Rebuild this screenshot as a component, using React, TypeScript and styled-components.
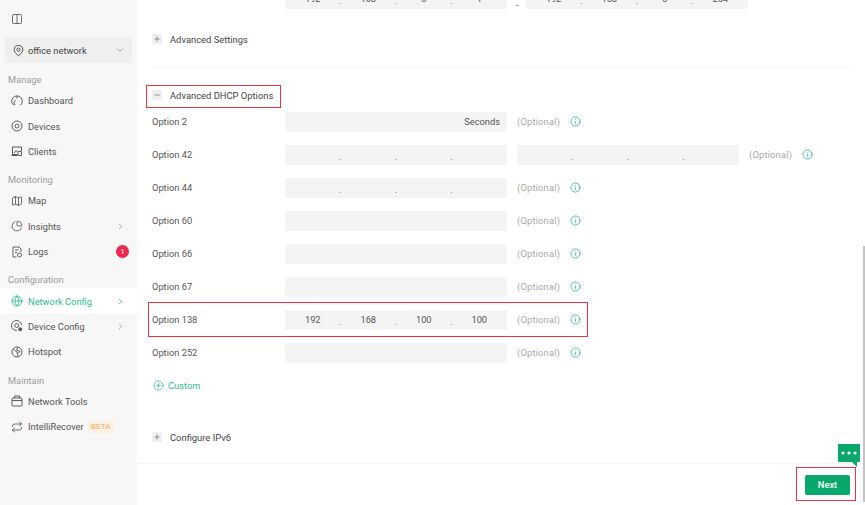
import React from 'react';
import styled, { createGlobalStyle } from 'styled-components';
import {
  ChartPie,
  ChevronDown,
  ChevronRight,
  CirclePlus,
  Columns2,
  Globe,
  Info,
  Map as MapIcon,
  Minus,
  Plus,
  Repeat,
} from 'lucide-react';

const GlobalStyle = createGlobalStyle`
  html, body {
    margin: 0;
    padding: 0;
    height: 100%;
    overflow: hidden;
    background: #fff;
  }
  #root {
    height: 100%;
  }
  * {
    box-sizing: border-box;
  }
`;

const Page = styled.div`
  position: relative;
  display: flex;
  width: 865px;
  height: 505px;
  overflow: hidden;
  font-family: Roboto, 'Noto Sans', sans-serif;
  font-size: 9.3px;
  color: #555;
`;

const Sidebar = styled.aside`
  flex: 0 0 137px;
  width: 137px;
  min-width: 0;
  background: #f7f7f7;
  display: flex;
  flex-direction: column;
`;

const SidebarTop = styled.div`
  height: 37px;
  padding: 13px 0 0 11px;
  color: #555;
`;

const SiteSelect = styled.div`
  margin: 0 5px;
  height: 26px;
  border-radius: 3px;
  background: #efefef;
  display: flex;
  align-items: center;
  padding: 0 7px;
  gap: 3px;
  color: #444;
  span {
    flex: 1;
  }
`;

const SectionLabel = styled.div<{ $gap: number }>`
  height: 14px;
  margin-top: ${(p) => p.$gap}px;
  margin-bottom: 2px;
  padding-left: 8px;
  line-height: 16px;
  color: #9c9c9c;
`;

const NavItem = styled.div<{ $active?: boolean }>`
  height: 25.4px;
  display: flex;
  align-items: center;
  padding: 0 12px 0 11px;
  gap: 5px;
  background: ${(p) => (p.$active ? '#fff' : 'transparent')};
  color: ${(p) => (p.$active ? '#2dbd8d' : '#555')};
  svg {
    flex: none;
  }
`;

const NavText = styled.span<{ $fit?: boolean }>`
  flex: ${(p) => (p.$fit ? 'none' : 1)};
  white-space: nowrap;
`;

const Count = styled.span`
  width: 13px;
  height: 13px;
  margin-right: -4px;
  border-radius: 50%;
  background: #f0284f;
  color: #fff;
  font-size: 8px;
  line-height: 13px;
  text-align: center;
`;

const Beta = styled.span`
  margin-left: -1px;
  width: 26px;
  height: 13px;
  border-radius: 2px;
  background: #fdf0e4;
  color: #f9a85c;
  font-size: 8px;
  line-height: 14px;
  text-align: center;
`;

const Main = styled.main`
  position: relative;
  flex: 1;
  display: flex;
  flex-direction: column;
  min-width: 0;
`;

const Content = styled.div`
  flex: 1;
  overflow: hidden;
  padding: 0 15px;
`;

const RangeRow = styled.div`
  height: 9px;
  margin-left: 133px;
  display: flex;
  align-items: flex-end;
  gap: 9px;
`;

const Dash = styled.span`
  width: 1px;
  height: 9px;
  line-height: 9px;
`;

const SectionHead = styled.div<{ $top: number }>`
  position: relative;
  display: flex;
  align-items: center;
  gap: 8px;
  height: 12px;
  margin-top: ${(p) => p.$top}px;
  color: #444;
  font-size: 9.4px;
`;

const Toggle = styled.span`
  width: 10px;
  height: 10px;
  border-radius: 1px;
  background: #efefef;
  color: #666;
  display: flex;
  align-items: center;
  justify-content: center;
`;

const Divider = styled.div`
  height: 1px;
  margin-top: 22px;
  background: #f6f6f6;
`;

const OptionList = styled.div`
  margin-top: 4px;
`;

const Row = styled.div`
  position: relative;
  display: flex;
  align-items: center;
  height: 33.05px;
`;

const RowLabel = styled.label`
  flex: 0 0 133px;
`;

const Field = styled.div<{ $clipped?: boolean }>`
  flex: 0 0 222px;
  height: ${(p) => (p.$clipped ? '9px' : '20px')};
  border-radius: ${(p) => (p.$clipped ? '0 0 2px 2px' : '2px')};
  background: #f4f4f4;
  overflow: hidden;
  display: flex;
  align-items: ${(p) => (p.$clipped ? 'flex-end' : 'center')};
`;

const Seconds = styled.span`
  margin-left: auto;
  padding-right: 7px;
`;

const Octet = styled.span`
  flex: 1 0 0;
  height: 20px;
  line-height: 20px;
  text-align: center;
`;

const Dot = styled.span`
  width: 0;
  height: 20px;
  line-height: 23px;
  display: inline-flex;
  justify-content: center;
  color: #666;
`;

const Optional = styled.span`
  margin-left: 10px;
  color: #a9a9a9;
  letter-spacing: 0.2px;
`;

const Hint = styled(Info)`
  margin-left: 10px;
  color: #2dbd8d;
`;

const SecondField = styled.div`
  margin-left: 10px;
  display: flex;
  flex: 0 0 222px;
`;

const CustomLink = styled.div`
  display: flex;
  align-items: center;
  gap: 4px;
  height: 14px;
  margin-top: 9px;
  margin-left: 1px;
  color: #2dbd8d;
`;

const Highlight = styled.div<{ $inset: string; $width?: number }>`
  position: absolute;
  inset: ${(p) => p.$inset};
  ${(p) => (p.$width ? `width: ${p.$width}px;` : '')}
  border: 1px solid #ee3340;
  pointer-events: none;
`;

const Footer = styled.footer`
  flex: 0 0 42px;
  border-top: 1px solid #f5f5f5;
  display: flex;
  align-items: center;
  justify-content: flex-end;
  padding-right: 15px;
`;

const NextButton = styled.button`
  position: relative;
  width: 45px;
  height: 20px;
  padding: 0;
  border: 0;
  border-radius: 2px;
  background: #08a86c;
  color: #fff;
  font: 500 9.3px Roboto, sans-serif;
`;

const ChatBubble = styled.svg`
  position: absolute;
  right: 5px;
  top: 444px;
`;

const ScrollThumb = styled.div`
  position: absolute;
  top: 246px;
  right: 0;
  bottom: 3px;
  width: 2px;
  background: #c4c4c4;
`;

const PinIcon = () => (
  <svg width="13" height="13" viewBox="0 0 24 24" fill="none" stroke="currentColor" strokeWidth="1.7">
    <path d="M12 2.5c-4.6 0-8 3.5-8 7.9 0 5 4.6 8.6 8 11.1 3.4-2.5 8-6.1 8-11.1 0-4.4-3.4-7.9-8-7.9z" />
    <circle cx="12" cy="10.5" r="3" />
  </svg>
);

const DashboardIcon = () => (
  <svg width="12" height="12" viewBox="0 0 24 24" fill="none" stroke="currentColor" strokeWidth="1.9">
    <path d="M5.5 20.5a10.5 10.5 0 1 1 13 0" />
    <path d="M8.5 20a5.5 5.5 0 0 1 1-9.5" />
    <path d="M12 2v5" />
  </svg>
);

const DevicesIcon = () => (
  <svg width="12" height="12" viewBox="0 0 24 24" fill="none" stroke="currentColor" strokeWidth="1.9">
    <circle cx="12" cy="12" r="10" />
    <circle cx="12" cy="12" r="4" />
  </svg>
);

const ClientsIcon = () => (
  <svg width="12" height="12" viewBox="0 0 24 24" fill="none" stroke="currentColor" strokeWidth="2">
    <path d="M21 12V4H3v15h9" />
    <path d="M6 16l4-5 3 3" />
    <rect x="14" y="13" width="7" height="8" rx="1" />
    <path d="M1 21h12" />
  </svg>
);

const LogsIcon = () => (
  <svg width="12" height="12" viewBox="0 0 24 24" fill="none" stroke="currentColor" strokeWidth="1.9">
    <path d="M11 22H4V2h12l4 4v6" />
    <path d="M8 8h7M8 13h4" />
    <circle cx="17" cy="18" r="4" />
  </svg>
);

const DeviceConfigIcon = () => (
  <svg width="12" height="12" viewBox="0 0 24 24" fill="none" stroke="currentColor" strokeWidth="1.9">
    <path d="M21 10a10 10 0 1 0-9 11" />
    <circle cx="11.5" cy="11" r="4" />
    <circle cx="18.5" cy="18.5" r="3" fill="currentColor" />
  </svg>
);

const HotspotIcon = () => (
  <svg width="12" height="12" viewBox="0 0 24 24" fill="none" stroke="currentColor" strokeWidth="1.9">
    <circle cx="12" cy="12" r="10" />
    <path d="M5 7l7 5 2 9M14 3l-3 5 7 3-4 4" />
  </svg>
);

const ToolsIcon = () => (
  <svg width="12" height="12" viewBox="0 0 24 24" fill="none" stroke="currentColor" strokeWidth="1.9">
    <rect x="2" y="6" width="20" height="16" rx="1.5" />
    <path d="M7 6V2h10v4M2 11h20" />
  </svg>
);

const empty = ['', '', '', ''];

function IpField({ values }: { values: string[] }) {
  return (
    <>
      {values.map((value, i) => (
        <React.Fragment key={i}>
          <Octet>{value}</Octet>
          {i < 3 && <Dot>.</Dot>}
        </React.Fragment>
      ))}
    </>
  );
}

function OptionTail() {
  return (
    <>
      <Optional>(Optional)</Optional>
      <Hint size={11} strokeWidth={1.8} />
    </>
  );
}

function App() {
  return (
    <Page>
      <GlobalStyle />
      <Sidebar>
        <SidebarTop>
          <Columns2 size={12} strokeWidth={1.7} />
        </SidebarTop>
        <SiteSelect>
          <PinIcon />
          <span>office network</span>
          <ChevronDown size={10} color="#999" />
        </SiteSelect>
        <SectionLabel $gap={9}>Manage</SectionLabel>
        <NavItem><DashboardIcon /><NavText>Dashboard</NavText></NavItem>
        <NavItem><DevicesIcon /><NavText>Devices</NavText></NavItem>
        <NavItem><ClientsIcon /><NavText>Clients</NavText></NavItem>
        <SectionLabel $gap={8}>Monitoring</SectionLabel>
        <NavItem><MapIcon size={12} strokeWidth={1.7} /><NavText>Map</NavText></NavItem>
        <NavItem><ChartPie size={12} strokeWidth={1.7} /><NavText>Insights</NavText><ChevronRight size={9} color="#999" /></NavItem>
        <NavItem><LogsIcon /><NavText>Logs</NavText><Count>1</Count></NavItem>
        <SectionLabel $gap={8}>Configuration</SectionLabel>
        <NavItem $active><Globe size={12} strokeWidth={1.7} /><NavText>Network Config</NavText><ChevronRight size={9} /></NavItem>
        <NavItem><DeviceConfigIcon /><NavText>Device Config</NavText><ChevronRight size={9} color="#999" /></NavItem>
        <NavItem><HotspotIcon /><NavText>Hotspot</NavText></NavItem>
        <SectionLabel $gap={8}>Maintain</SectionLabel>
        <NavItem><ToolsIcon /><NavText>Network Tools</NavText></NavItem>
        <NavItem><Repeat size={12} strokeWidth={1.7} /><NavText $fit>IntelliRecover</NavText><Beta>BETA</Beta></NavItem>
      </Sidebar>
      <Main>
        <Content>
          <RangeRow>
            <Field $clipped><IpField values={['192', '168', '0', '1']} /></Field>
            <Dash>-</Dash>
            <Field $clipped><IpField values={['192', '168', '0', '254']} /></Field>
          </RangeRow>
          <SectionHead $top={24}>
            <Toggle><Plus size={8} /></Toggle>
            Advanced Settings
          </SectionHead>
          <Divider />
          <SectionHead $top={21}>
            <Toggle><Minus size={8} /></Toggle>
            Advanced DHCP Options
            <Highlight $inset="-4px auto -7px -6px" $width={135} />
          </SectionHead>
          <OptionList>
            <Row>
              <RowLabel>Option 2</RowLabel>
              <Field><Seconds>Seconds</Seconds></Field>
              <OptionTail />
            </Row>
            <Row>
              <RowLabel>Option 42</RowLabel>
              <Field><IpField values={empty} /></Field>
              <SecondField><Field><IpField values={empty} /></Field></SecondField>
              <OptionTail />
            </Row>
            <Row>
              <RowLabel>Option 44</RowLabel>
              <Field><IpField values={empty} /></Field>
              <OptionTail />
            </Row>
            {['Option 60', 'Option 66', 'Option 67'].map((label) => (
              <Row key={label}>
                <RowLabel>{label}</RowLabel>
                <Field />
                <OptionTail />
              </Row>
            ))}
            <Row>
              <RowLabel>Option 138</RowLabel>
              <Field><IpField values={['192', '168', '100', '100']} /></Field>
              <OptionTail />
              <Highlight $inset="-1px auto -1px -4px" $width={440} />
            </Row>
            <Row>
              <RowLabel>Option 252</RowLabel>
              <Field />
              <OptionTail />
            </Row>
          </OptionList>
          <CustomLink>
            <CirclePlus size={11} strokeWidth={1.7} />
            Custom
          </CustomLink>
          <SectionHead $top={39}>
            <Toggle><Plus size={8} /></Toggle>
            Configure IPv6
          </SectionHead>
        </Content>
        <Footer>
          <NextButton>
            Next
            <Highlight $inset="-8px -6px -6px -9px" />
          </NextButton>
        </Footer>
      </Main>
      <ChatBubble width="22" height="23" viewBox="0 0 22 23">
        <path d="M1 0h20a1 1 0 0 1 1 1v16a1 1 0 0 1-1 1h-2v5l-5-5H1a1 1 0 0 1-1-1V1a1 1 0 0 1 1-1z" fill="#08a86c" />
        <circle cx="5" cy="9" r="1.6" fill="#fff" />
        <circle cx="11" cy="9" r="1.6" fill="#fff" />
        <circle cx="17" cy="9" r="1.6" fill="#fff" />
      </ChatBubble>
      <ScrollThumb />
    </Page>
  );
}

export default App;
